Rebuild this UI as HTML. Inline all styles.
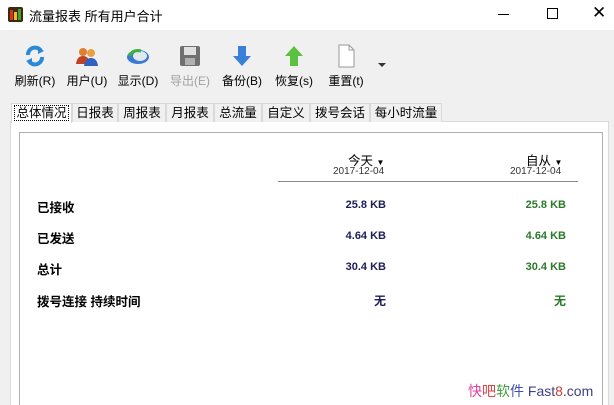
<!DOCTYPE html>
<html><head><meta charset="utf-8"><style>
*{margin:0;padding:0;box-sizing:border-box}
html,body{width:614px;height:405px;overflow:hidden}
body{background:#f0f0f0;font-family:"Liberation Sans","Noto Sans CJK SC",sans-serif;position:relative;font-size:12px;color:#000}
#w{position:absolute;left:0;top:0;width:614px;height:405px;overflow:hidden}
.abs{position:absolute}
.title{left:0;top:0;width:614px;height:30px;background:#fff}
.btn{position:absolute;top:44px;width:52px;text-align:center;font-size:12px}
.btn svg{display:block;margin:0 auto 4px}
.tab{position:absolute;top:103px;height:19px;font-size:12.5px;line-height:18px;text-align:center;border:1px solid #d9d9d9;border-bottom:none;background:#f0f0f0}
.lbl{left:37px;font-size:12.5px;font-weight:bold}
.v1{right:228px;font-weight:bold;color:#1a1f5a;font-size:11px}
.v2{right:48px;font-weight:bold;color:#2a7a2a;font-size:11px}
</style></head><body><div id="w">
<div class="abs title"></div>
<div class="abs" style="left:8px;top:7px;width:15px;height:15px;background:#3a2a10;border-radius:2px">
<div class="abs" style="left:2px;top:3px;width:3px;height:10px;background:#e03020"></div>
<div class="abs" style="left:6px;top:5px;width:3px;height:8px;background:#f0c020"></div>
<div class="abs" style="left:10px;top:2px;width:3px;height:11px;background:#40a030"></div></div>
<div class="abs" style="left:29px;top:6px;font-size:13px">流量报表 所有用户合计</div>
<div class="abs" style="left:498px;top:14px;width:11px;height:1px;background:#000"></div>
<div class="abs" style="left:547px;top:8px;width:11px;height:11px;border:1px solid #000"></div>
<div class="abs" style="left:592px;top:3px;font-size:17px;font-weight:lighter">✕</div>

<div class="btn" style="left:9px"><svg width="24" height="24"><path d="M5 11a7 7 0 0 1 13-4" stroke="#2a8ad8" stroke-width="4" fill="none"/><path d="M19 13a7 7 0 0 1-13 4" stroke="#2a8ad8" stroke-width="4" fill="none"/><path d="M15 3l6 4-6 3z" fill="#2a8ad8"/><path d="M9 21l-6-4 6-3z" fill="#2a8ad8"/></svg>刷新(R)</div>
<div class="btn" style="left:61px"><svg width="24" height="24"><circle cx="8" cy="8" r="4" fill="#e08030"/><circle cx="16" cy="9" r="4" fill="#e8a040"/><path d="M1 20q1-8 7-8t7 8z" fill="#c04020"/><path d="M9 22q1-8 7-8t7 8z" fill="#3060c0"/></svg>用户(U)</div>
<div class="btn" style="left:112px"><svg width="24" height="24"><ellipse cx="12" cy="13" rx="11" ry="7" fill="#3a7ad0"/><ellipse cx="14" cy="12" rx="7" ry="5" fill="#e0e8f0"/><path d="M3 12q4-7 12-5" stroke="#40b040" stroke-width="3" fill="none"/></svg>显示(D)</div>
<div class="btn" style="left:164px;color:#a0a0a0"><svg width="24" height="24"><rect x="2" y="2" width="20" height="20" rx="2" fill="#707070"/><rect x="6" y="3" width="12" height="8" fill="#e0e0e0"/><rect x="7" y="14" width="10" height="7" fill="#b0b0b0"/></svg>导出(E)</div>
<div class="btn" style="left:216px"><svg width="24" height="24"><path d="M8 2h8v10h5l-9 10-9-10h5z" fill="#3a80d8"/></svg>备份(B)</div>
<div class="btn" style="left:268px"><svg width="24" height="24"><path d="M8 22h8v-10h5l-9-10-9 10h5z" fill="#5cc040"/></svg>恢复(s)</div>
<div class="btn" style="left:320px"><svg width="24" height="24"><path d="M5 1h10l5 5v17h-15z" fill="#fff" stroke="#999"/><path d="M15 1v5h5" fill="none" stroke="#999"/></svg>重置(t)</div>
<div class="abs" style="left:378px;top:63px;width:0;height:0;border-left:4px solid transparent;border-right:4px solid transparent;border-top:4px solid #333"></div>

<div class="abs" style="left:10px;top:121px;width:599px;height:290px;background:#fff;border:1px solid #dadada"></div>
<div class="abs" style="left:19px;top:132px;width:584px;height:290px;border:1px solid #b0b0b0;background:#fff"></div>

<div class="tab" style="left:11px;width:61px;background:#fff;height:20px"><span style="border:1px dotted #000;padding:0 1px">总体情况</span></div>
<div class="tab" style="left:72px;width:46px">日报表</div>
<div class="tab" style="left:118px;width:48px">周报表</div>
<div class="tab" style="left:166px;width:48px">月报表</div>
<div class="tab" style="left:214px;width:48px">总流量</div>
<div class="tab" style="left:262px;width:48px">自定义</div>
<div class="tab" style="left:310px;width:60px">拨号会话</div>
<div class="tab" style="left:370px;width:72px">每小时流量</div>

<div class="abs" style="left:348px;top:150px;font-size:12.5px">今天 <span style="font-size:8px">▼</span></div>
<div class="abs" style="left:333px;top:166px;font-size:10px;color:#333">2017-12-04</div>
<div class="abs" style="left:526px;top:150px;font-size:12.5px">自从 <span style="font-size:8px">▼</span></div>
<div class="abs" style="left:510px;top:166px;font-size:10px;color:#333">2017-12-04</div>
<div class="abs" style="left:278px;top:181px;width:300px;height:1px;background:#888"></div>

<div class="abs lbl" style="top:197px">已接收</div>
<div class="abs lbl" style="top:228px">已发送</div>
<div class="abs lbl" style="top:259px">总计</div>
<div class="abs lbl" style="top:291px">拨号连接 持续时间</div>
<div class="abs v1" style="top:199px">25.8 KB</div>
<div class="abs v1" style="top:230px">4.64 KB</div>
<div class="abs v1" style="top:261px">30.4 KB</div>
<div class="abs v1" style="top:292px;font-size:12px">无</div>
<div class="abs v2" style="top:199px">25.8 KB</div>
<div class="abs v2" style="top:230px">4.64 KB</div>
<div class="abs v2" style="top:261px">30.4 KB</div>
<div class="abs v2" style="top:292px;font-size:12px">无</div>

<div class="abs" style="left:468px;top:381px;font-size:14px;white-space:nowrap"><span style="color:#e040a0">快</span><span style="color:#e04040">吧</span><span style="color:#40a040">软</span><span style="color:#4050b0">件</span> <span style="color:#404080">Fast</span><span style="color:#c04040">8</span><span style="color:#404080">.com</span></div>
</div></body></html>
